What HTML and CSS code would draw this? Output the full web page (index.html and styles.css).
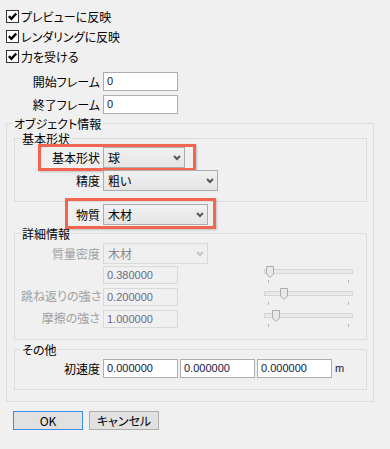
FILE: index.html
```html
<!DOCTYPE html>
<html lang="ja">
<head>
  <meta charset="UTF-8">
  <title>オブジェクト設定</title>
  <link rel="stylesheet" href="styles.css">
</head>
<body>
  <div class="checks">
    <div class="check"><span class="box"><svg width="9" height="9" viewBox="0 0 9 9"><path d="M0.8 4.2 L3.4 6.8 L8.2 1.6" fill="none" stroke="#000" stroke-width="2.4"/></svg></span>プレビューに反映</div>
    <div class="check"><span class="box"><svg width="9" height="9" viewBox="0 0 9 9"><path d="M0.8 4.2 L3.4 6.8 L8.2 1.6" fill="none" stroke="#000" stroke-width="2.4"/></svg></span>レンダリングに反映</div>
    <div class="check"><span class="box"><svg width="9" height="9" viewBox="0 0 9 9"><path d="M0.8 4.2 L3.4 6.8 L8.2 1.6" fill="none" stroke="#000" stroke-width="2.4"/></svg></span>力を受ける</div>
  </div>

  <div class="frames">
    <div class="field"><span class="lbl">開始フレーム</span><span class="edit">0</span></div>
    <div class="field"><span class="lbl">終了フレーム</span><span class="edit">0</span></div>
  </div>

  <fieldset class="group outer">
    <legend>オブジェクト情報</legend>

    <fieldset class="group inner shape">
      <legend>基本形状</legend>
      <div class="field">
        <span class="lbl">基本形状</span>
        <span class="combo w82">球<svg class="arrow" width="8" height="6" viewBox="0 0 8 6"><path d="M1 1 L4 4 L7 1" fill="none" stroke="#555" stroke-width="2"/></svg></span>
        <span class="mark mark-shape"></span>
      </div>
      <div class="field gap2">
        <span class="lbl">精度</span>
        <span class="combo w115">粗い<svg class="arrow" width="8" height="6" viewBox="0 0 8 6"><path d="M1 1 L4 4 L7 1" fill="none" stroke="#555" stroke-width="2"/></svg></span>
      </div>
    </fieldset>

    <div class="field matter">
      <span class="lbl">物質</span>
      <span class="combo w105">木材<svg class="arrow" width="8" height="6" viewBox="0 0 8 6"><path d="M1 1 L4 4 L7 1" fill="none" stroke="#555" stroke-width="2"/></svg></span>
      <span class="mark mark-matter"></span>
    </div>

    <fieldset class="group inner details">
      <legend>詳細情報</legend>
      <div class="field off">
        <span class="lbl">質量密度</span>
        <span class="combo w105">木材<svg class="arrow" width="8" height="6" viewBox="0 0 8 6"><path d="M1 1 L4 4 L7 1" fill="none" stroke="#c4c4c4" stroke-width="2"/></svg></span>
      </div>
      <div class="field off slrow first">
        <span class="lbl"></span>
        <span class="edit">0.380000</span>
        <div class="slider"><span class="track"></span><span class="thumb" style="left: 2px"><svg width="8" height="12" viewBox="0 0 8 12"><path d="M0.5 0.5 H7.5 V8 L4 11.5 L0.5 8 Z" fill="#e8e8e8" stroke="#acacac"/></svg></span><span class="tick"></span><span class="tick end"></span></div>
      </div>
      <div class="field off slrow">
        <span class="lbl">跳ね返りの強さ</span>
        <span class="edit">0.200000</span>
        <div class="slider"><span class="track"></span><span class="thumb" style="left: 16px"><svg width="8" height="12" viewBox="0 0 8 12"><path d="M0.5 0.5 H7.5 V8 L4 11.5 L0.5 8 Z" fill="#e8e8e8" stroke="#acacac"/></svg></span><span class="tick"></span><span class="tick end"></span></div>
      </div>
      <div class="field off slrow">
        <span class="lbl">摩擦の強さ</span>
        <span class="edit">1.000000</span>
        <div class="slider"><span class="track"></span><span class="thumb" style="left: 8px"><svg width="8" height="12" viewBox="0 0 8 12"><path d="M0.5 0.5 H7.5 V8 L4 11.5 L0.5 8 Z" fill="#e8e8e8" stroke="#acacac"/></svg></span><span class="tick"></span><span class="tick end"></span></div>
      </div>
    </fieldset>

    <fieldset class="group inner other">
      <legend>その他</legend>
      <div class="field">
        <span class="lbl">初速度</span>
        <span class="edit">0.000000</span>
        <span class="edit">0.000000</span>
        <span class="edit">0.000000</span>
        <span class="unit">m</span>
      </div>
    </fieldset>
  </fieldset>

  <div class="buttons">
    <button class="btn default">OK</button>
    <button class="btn">キャンセル</button>
  </div>
</body>
</html>
```

FILE: styles.css
```css
* { box-sizing: border-box; }
body {
  margin: 0;
  width: 390px;
  height: 449px;
  overflow: hidden;
  background: #f0f0f0;
  font-family: "Noto Sans CJK JP", sans-serif;
  font-size: 12px;
  line-height: 15px;
  color: #000;
  font-feature-settings: "palt";
}

/* checkboxes */
.checks {
  padding-top: 10px;
  display: flex;
  flex-direction: column;
  gap: 7px;
}
.check {
  display: flex;
  align-items: center;
  height: 13px;
  padding-left: 6px;
  gap: 2px;
}
.box {
  width: 13px;
  height: 13px;
  border: 1px solid #333;
  background: #fff;
  display: flex;
  align-items: center;
  justify-content: center;
}

/* label + control rows */
.field {
  display: flex;
  align-items: center;
  position: relative;
}
.lbl {
  flex: none;
  width: var(--lw);
  margin-right: 3px;
  text-align: right;
  white-space: nowrap;
}
.edit {
  flex: none;
  width: 75px;
  height: 19px;
  margin-right: 2px;
  padding: 0 3px;
  border: 1px solid #abadb3;
  background: #fff;
  font-family: "Liberation Sans", "Noto Sans CJK JP", sans-serif;
  font-size: 11px;
  line-height: 17px;
  color: #16163a;
}
.combo {
  flex: none;
  height: 21px;
  padding: 0 4px;
  display: flex;
  align-items: center;
  justify-content: space-between;
  border: 1px solid #acacac;
  background: linear-gradient(#f0f0f0, #e5e5e5);
}
.w82 { width: 82px; }
.w105 { width: 105px; }
.w115 { width: 115px; }
.arrow { margin-right: -1px; }
.unit {
  margin-left: 1px;
  font-family: "Liberation Sans", sans-serif;
  font-size: 11px;
  color: #16163a;
}

.frames {
  --lw: 100px;
  margin-top: 9px;
  display: flex;
  flex-direction: column;
  gap: 4px;
}

/* group boxes */
.group {
  margin: 0;
  padding: 0 6px;
  min-width: 0;
  border: 1px solid #dcdcdc;
}
.group legend {
  padding: 0 1px;
  line-height: 15px;
}
.outer {
  --lw: 87px;
  width: 368px;
  margin: 2px 0 0 6px;
  padding-bottom: 11px;
}
.inner {
  --lw: 79px;
  width: 353px;
  margin-left: 1px;
}
.shape {
  padding-top: 1px;
  padding-bottom: 10px;
}
.gap2 { margin-top: 2px; }
.matter { margin-top: 2px; }
.details {
  margin-top: 1px;
  padding-top: 2px;
  padding-bottom: 11px;
}
.other {
  margin-top: 2px;
  padding-top: 2px;
  padding-bottom: 11px;
}

/* disabled rows */
.off .lbl { color: #a0a0a0; }
.off .combo {
  border-color: #d9d9d9;
  background: #efefef;
  color: #8a8a8a;
}
.off .edit {
  height: 18px;
  line-height: 16px;
  border-color: #d9d9d9;
  background: #f0f0f0;
  color: #6a6a88;
}
.slrow { margin-top: 4px; align-items: flex-start; }
.slrow.first { margin-top: 2px; }

/* sliders */
.slider {
  position: relative;
  width: 89px;
  height: 18px;
  margin-left: 84px;
}
.track {
  position: absolute;
  left: 0;
  right: 0;
  top: 3px;
  height: 5px;
  border: 1px solid #d6d6d6;
  background: #e7eaea;
}
.thumb {
  position: absolute;
  top: 0;
  width: 8px;
  height: 12px;
}
.thumb svg { display: block; }
.tick {
  position: absolute;
  left: 4px;
  top: 14px;
  width: 1px;
  height: 3px;
  background: #b4b4b4;
}
.tick.end { left: 84px; }

/* red highlight boxes */
.mark {
  position: absolute;
  border: 3px solid #f2654f;
  box-shadow: 1px 1px 2px rgba(0, 0, 0, 0.2);
  pointer-events: none;
}
.mark-shape { left: 17px; top: -3px; width: 158px; height: 27px; }
.mark-matter { left: 52px; top: -6px; width: 151px; height: 31px; }

/* dialog buttons */
.buttons {
  display: flex;
  gap: 6px;
  margin: 9px 0 0 13px;
}
.btn {
  width: 70px;
  height: 19px;
  padding: 0;
  border: 1px solid #adadad;
  background: #e1e1e1;
  font-family: "Noto Sans CJK JP", sans-serif;
  font-size: 12px;
  line-height: 15px;
  color: #000;
  font-feature-settings: "palt";
}
.btn.default { border-color: #3c8fe6; }
```
